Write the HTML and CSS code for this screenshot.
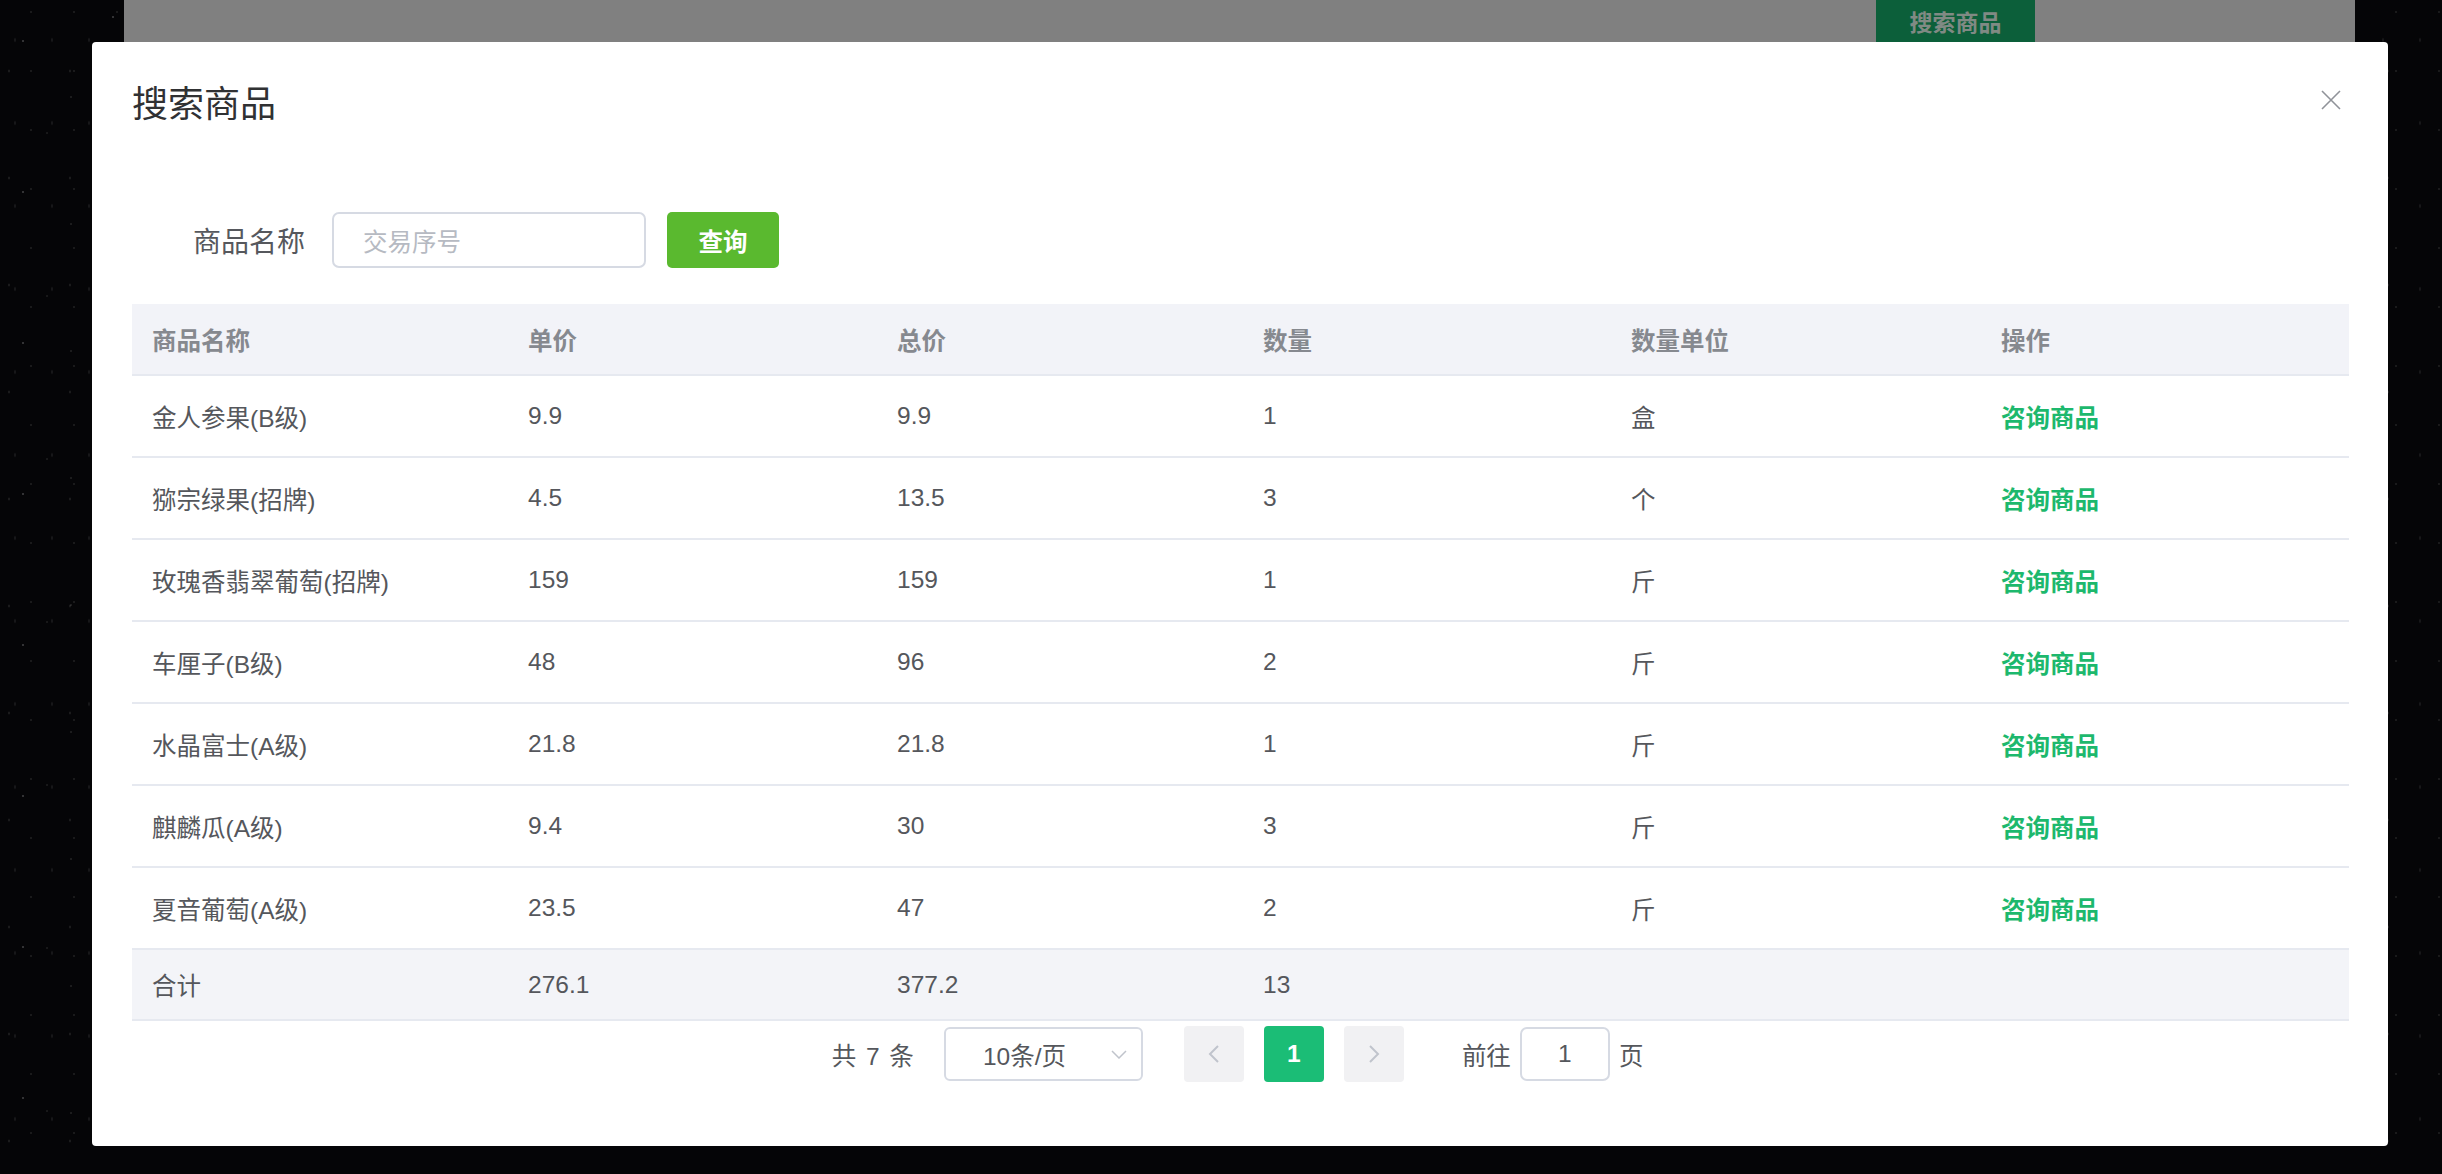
FILE: index.html
```html
<!DOCTYPE html>
<html lang="zh-CN">
<head>
<meta charset="utf-8">
<title>搜索商品</title>
<link rel="stylesheet" href="styles.css">
</head>
<body>
  <div class="page">
    <div class="topbar">
      <span class="top-btn">搜索商品</span>
    </div>
  </div>

  <div class="dialog">
    <div class="dialog-header">
      <span class="dialog-title">搜索商品</span>
      <button class="dialog-close" aria-label="关闭">
        <svg viewBox="0 0 20 20" width="20" height="20"><path d="M1 1 L19 19 M19 1 L1 19" stroke="#909399" stroke-width="1.6" fill="none"/></svg>
      </button>
    </div>

    <div class="dialog-body">
      <div class="search-form">
        <label class="form-label">商品名称</label>
        <div class="form-input"><span class="placeholder">交易序号</span></div>
        <button class="btn-query">查询</button>
      </div>

      <div class="table">
        <div class="tr thead">
          <div class="cell">商品名称</div>
          <div class="cell">单价</div>
          <div class="cell">总价</div>
          <div class="cell">数量</div>
          <div class="cell">数量单位</div>
          <div class="cell">操作</div>
        </div>
        <div class="tr">
          <div class="cell">金人参果(B级)</div><div class="cell">9.9</div><div class="cell">9.9</div><div class="cell">1</div><div class="cell">盒</div><div class="cell"><a class="link">咨询商品</a></div>
        </div>
        <div class="tr">
          <div class="cell">猕宗绿果(招牌)</div><div class="cell">4.5</div><div class="cell">13.5</div><div class="cell">3</div><div class="cell">个</div><div class="cell"><a class="link">咨询商品</a></div>
        </div>
        <div class="tr">
          <div class="cell">玫瑰香翡翠葡萄(招牌)</div><div class="cell">159</div><div class="cell">159</div><div class="cell">1</div><div class="cell">斤</div><div class="cell"><a class="link">咨询商品</a></div>
        </div>
        <div class="tr">
          <div class="cell">车厘子(B级)</div><div class="cell">48</div><div class="cell">96</div><div class="cell">2</div><div class="cell">斤</div><div class="cell"><a class="link">咨询商品</a></div>
        </div>
        <div class="tr">
          <div class="cell">水晶富士(A级)</div><div class="cell">21.8</div><div class="cell">21.8</div><div class="cell">1</div><div class="cell">斤</div><div class="cell"><a class="link">咨询商品</a></div>
        </div>
        <div class="tr">
          <div class="cell">麒麟瓜(A级)</div><div class="cell">9.4</div><div class="cell">30</div><div class="cell">3</div><div class="cell">斤</div><div class="cell"><a class="link">咨询商品</a></div>
        </div>
        <div class="tr">
          <div class="cell">夏音葡萄(A级)</div><div class="cell">23.5</div><div class="cell">47</div><div class="cell">2</div><div class="cell">斤</div><div class="cell"><a class="link">咨询商品</a></div>
        </div>
        <div class="tr tfoot">
          <div class="cell">合计</div><div class="cell">276.1</div><div class="cell">377.2</div><div class="cell">13</div><div class="cell"></div><div class="cell"></div>
        </div>
      </div>

      <div class="pagination">
        <span class="total">共 7 条</span>
        <div class="sizes">
          <span>10条/页</span>
          <svg class="caret" viewBox="0 0 16 9" width="16" height="9"><path d="M1 1 L8 8 L15 1" stroke="#c0c4cc" stroke-width="1.5" fill="none"/></svg>
        </div>
        <button class="pg-btn">
          <svg viewBox="0 0 12 18" width="12" height="18"><path d="M10 1 L2 9 L10 17" stroke="#c0c4cc" stroke-width="2" fill="none"/></svg>
        </button>
        <button class="pg-num active">1</button>
        <button class="pg-btn">
          <svg viewBox="0 0 12 18" width="12" height="18"><path d="M2 1 L10 9 L2 17" stroke="#c0c4cc" stroke-width="2" fill="none"/></svg>
        </button>
        <span class="jump-label">前往</span>
        <div class="jump-input">1</div>
        <span class="jump-unit">页</span>
      </div>
    </div>
  </div>
</body>
</html>
```

FILE: styles.css
```css
* { box-sizing: border-box; }

html, body {
  margin: 0;
  padding: 0;
}

body {
  width: 2442px;
  height: 1174px;
  overflow: hidden;
  position: relative;
  font-family: "Liberation Sans", "Noto Sans CJK SC", sans-serif;
  background-color: #050507;
  background-image:
    radial-gradient(1.2px 1.2px at 23px 41px, rgba(255,255,255,0.45), transparent),
    radial-gradient(1px 1px at 71px 97px, rgba(255,255,255,0.30), transparent),
    radial-gradient(1.5px 1.5px at 113px 17px, rgba(255,255,255,0.35), transparent),
    radial-gradient(1px 1px at 47px 133px, rgba(255,255,255,0.25), transparent),
    radial-gradient(1px 2px at 9px 71px, rgba(255,255,255,0.20), transparent),
    radial-gradient(1px 1px at 31px 12px, rgba(255,255,255,0.28), transparent),
    radial-gradient(1px 3px at 15px 40px, rgba(255,255,255,0.15), transparent);
  background-size: 137px 151px, 113px 127px, 171px 93px, 89px 163px, 61px 107px, 43px 59px, 37px 83px;
}

/* dimmed page behind the dialog */
.page {
  margin-left: 124px;
  width: 2231px;
  height: 1100px;
  background: #808080;
}

.topbar {
  display: flex;
  justify-content: flex-end;
  padding-right: 320px;
}

.top-btn {
  width: 159px;
  height: 60px;
  background: #0c5f3a;
  color: #808a84;
  font-weight: bold;
  font-size: 23px;
  line-height: 30px;
  padding-top: 8px;
  text-align: center;
}

/* dialog overlay */
.dialog {
  position: absolute;
  left: 92px;
  top: 42px;
  width: 2296px;
  height: 1104px;
  background: #fff;
  border-radius: 4px;
}

.dialog-header {
  position: relative;
  padding: 45px 40px 0;
  height: 81px;
}

.dialog-title {
  display: block;
  font-size: 36px;
  line-height: 36px;
  color: #303133;
}

.dialog-close {
  position: absolute;
  top: 48px;
  right: 47px;
  width: 20px;
  height: 20px;
  padding: 0;
  border: 0;
  background: transparent;
  display: flex;
}

.dialog-body {
  padding: 0 40px;
}

.search-form {
  margin-top: 89px;
  display: flex;
  align-items: center;
  height: 56px;
}

.form-label {
  width: 200px;
  padding-right: 27px;
  text-align: right;
  font-size: 28px;
  color: #56585d;
}

.form-input {
  width: 314px;
  height: 56px;
  border: 2px solid #d6dae3;
  border-radius: 7px;
  padding-left: 29px;
  display: flex;
  align-items: center;
}

.placeholder {
  font-size: 24.5px;
  color: #b6bac2;
}

.btn-query {
  margin-left: 21px;
  width: 112px;
  height: 56px;
  border: 0;
  border-radius: 5px;
  background: #5ab92f;
  color: #fff;
  font-family: inherit;
  font-weight: bold;
  font-size: 24.5px;
  padding: 0;
}

/* table */
.table {
  margin-top: 36px;
  width: 2217px;
}

.tr {
  display: grid;
  grid-template-columns: 376px 369px 366px 368px 370px 1fr;
  height: 82px;
  border-bottom: 2px solid #e6e9f0;
  font-size: 24.5px;
  color: #55575c;
}

.cell {
  padding-left: 20px;
  display: flex;
  align-items: center;
  white-space: nowrap;
}

.thead {
  height: 72px;
  background: #f2f3f8;
  color: #86898f;
  font-weight: bold;
}

.tfoot {
  height: 71px;
  background: #f3f4f8;
}

.link {
  color: #1db86d;
  font-weight: bold;
}

/* pagination */
.pagination {
  margin-top: 5px;
  width: 2217px;
  height: 56px;
  padding-right: 6px;
  display: flex;
  justify-content: center;
  align-items: center;
  font-size: 24.5px;
  color: #55575c;
}

.total {
  word-spacing: 3px;
}

.sizes {
  margin-left: 30px;
  width: 199px;
  height: 54px;
  border: 2px solid #d6dae3;
  border-radius: 6px;
  padding-left: 37px;
  display: flex;
  align-items: center;
  position: relative;
  color: #55575c;
}

.caret {
  position: absolute;
  right: 14px;
  top: 21px;
}

.pg-btn,
.pg-num {
  width: 60px;
  height: 56px;
  border: 0;
  border-radius: 4px;
  background: #f1f1f3;
  padding: 0;
  display: flex;
  align-items: center;
  justify-content: center;
  font-family: inherit;
}

.sizes + .pg-btn {
  margin-left: 41px;
}

.pg-num {
  margin: 0 20px;
}

.pg-num.active {
  background: #1bbd76;
  color: #fff;
  font-weight: bold;
  font-size: 24.5px;
}

.jump-label {
  margin-left: 58px;
}

.jump-input {
  margin-left: 9px;
  width: 90px;
  height: 54px;
  border: 2px solid #d6dae3;
  border-radius: 7px;
  display: flex;
  align-items: center;
  justify-content: center;
  color: #55575c;
}

.jump-unit {
  margin-left: 9px;
}
```
